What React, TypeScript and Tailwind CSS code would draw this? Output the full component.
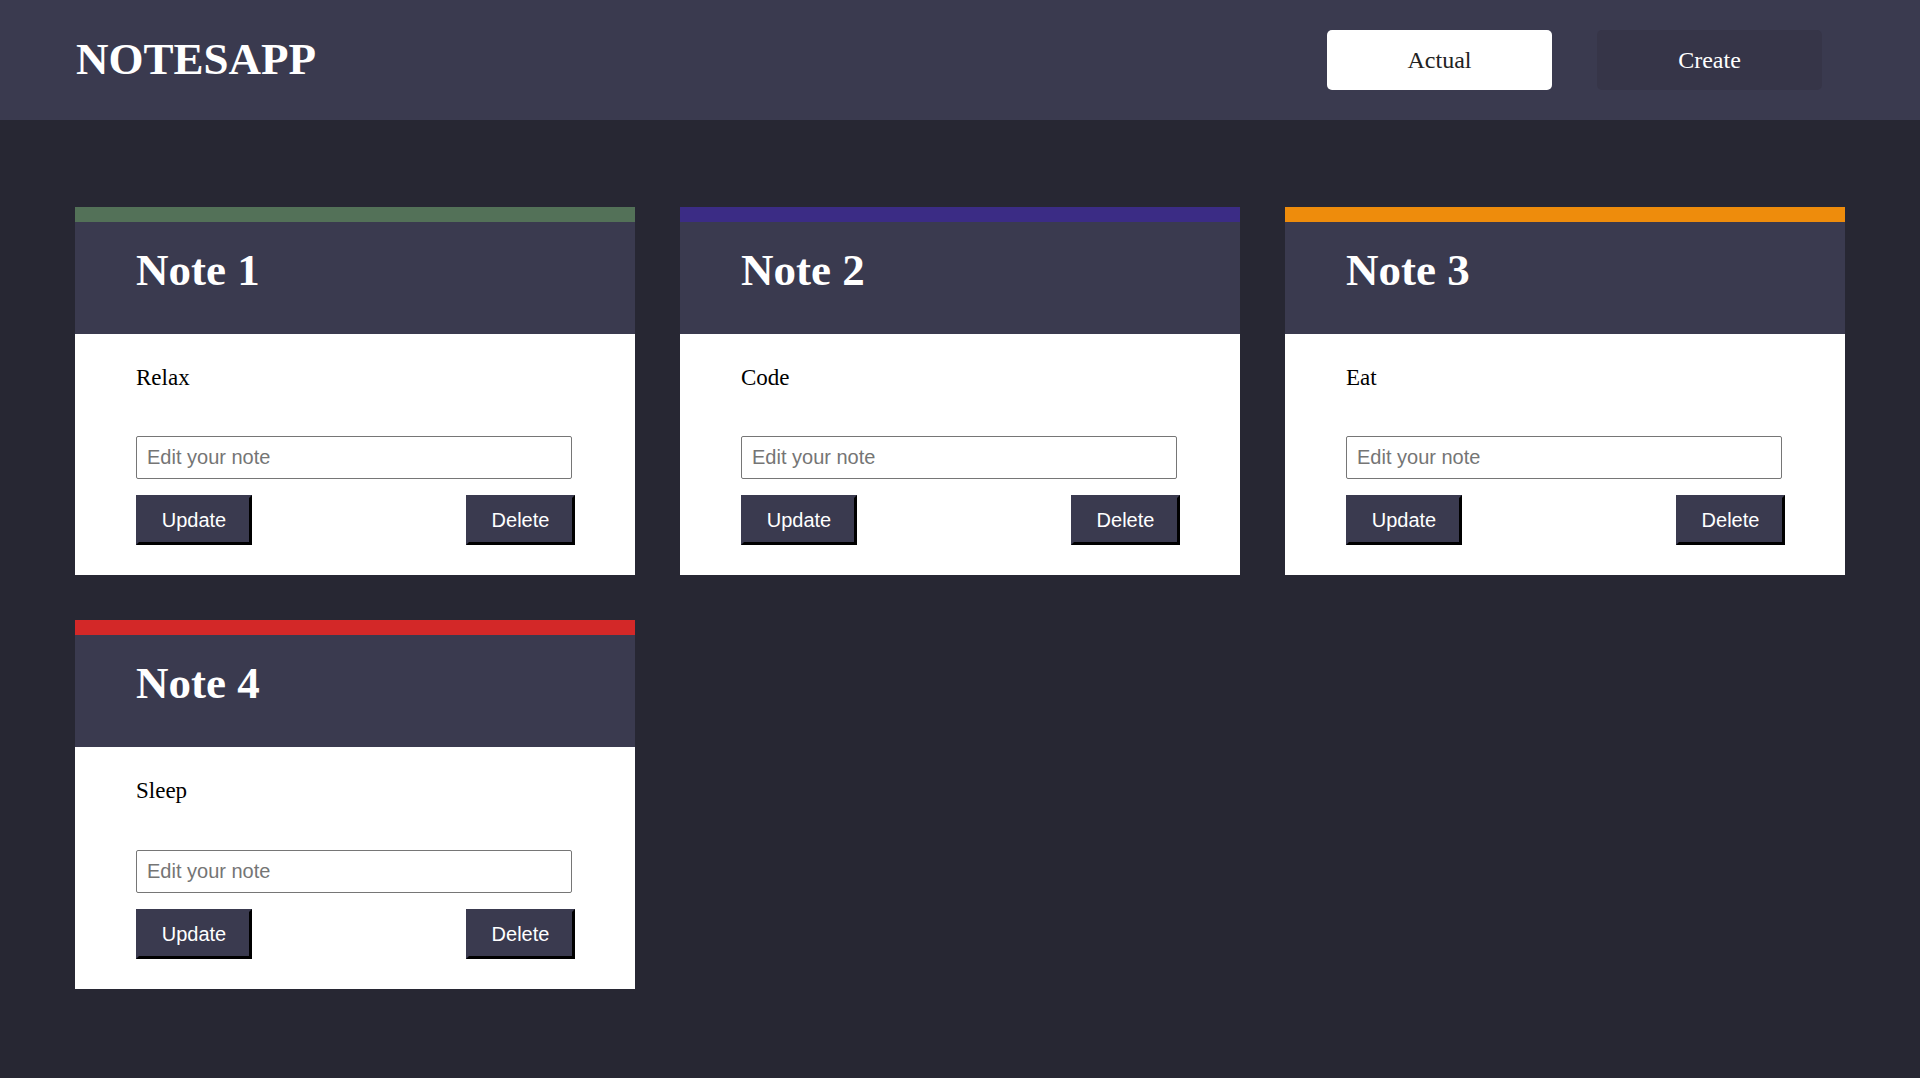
import React, { useState } from 'react';

type Note = {
  id: number;
  title: string;
  body: string;
  barClass: string;
};

const notes: Note[] = [
  { id: 1, title: 'Note 1', body: 'Relax', barClass: 'bg-[#537158]' },
  { id: 2, title: 'Note 2', body: 'Code', barClass: 'bg-[#3b2c85]' },
  { id: 3, title: 'Note 3', body: 'Eat', barClass: 'bg-[#ee8c0c]' },
  { id: 4, title: 'Note 4', body: 'Sleep', barClass: 'bg-[#d32828]' },
];

const NoteCard: React.FC<{ note: Note }> = ({ note }) => {
  const [draft, setDraft] = useState('');

  return (
    <div className="flex flex-col bg-white">
      <div className={`h-[15px] ${note.barClass}`} />
      <div className="h-[112px] bg-[#3a3a4f] pl-[61px] pt-[23px]">
        <h2 className="font-['Liberation_Serif',serif] text-[45px] font-bold leading-[1.15] text-white">
          {note.title}
        </h2>
      </div>
      <div className="flex flex-col pl-[61px] pt-[31px] pb-[30px]">
        <p className="font-['Liberation_Serif',serif] text-[23px] leading-[1.15] text-black">{note.body}</p>
        <input
          value={draft}
          onChange={(e) => setDraft(e.target.value)}
          placeholder="Edit your note"
          className="mt-[45px] h-[43px] w-[436px] rounded-[2px] border border-[#767676] px-[10px] font-['Liberation_Sans',Arial,sans-serif] text-[20px] text-black placeholder:text-[#757575] outline-none"
        />
        <div className="mt-[16px] flex w-[439px] justify-between">
          <button className="h-[50px] w-[116px] border-[3px] border-t-[#3a3a4f] border-l-[#3a3a4f] border-r-black border-b-black bg-[#3a3a4f] font-['Liberation_Sans',Arial,sans-serif] text-[20px] text-white">
            Update
          </button>
          <button className="h-[50px] w-[109px] border-[3px] border-t-[#3a3a4f] border-l-[#3a3a4f] border-r-black border-b-black bg-[#3a3a4f] font-['Liberation_Sans',Arial,sans-serif] text-[20px] text-white">
            Delete
          </button>
        </div>
      </div>
    </div>
  );
};

const App: React.FC = () => {
  const [view, setView] = useState<'actual' | 'create'>('actual');

  return (
    <div className="min-h-screen bg-[#272733] font-['Liberation_Serif',serif]">
      <header className="flex h-[120px] items-center justify-between bg-[#3a3a4f] pl-[76px] pr-[98px]">
        <h1 className="text-[45px] font-bold leading-[1.15] text-white">NOTESAPP</h1>
        <nav className="flex gap-[45px]">
          <button
            onClick={() => setView('actual')}
            className={`h-[60px] w-[225px] rounded-[5px] text-[24px] ${
              view === 'actual' ? 'bg-white text-[#222]' : 'bg-[#363548] text-white'
            }`}
          >
            Actual
          </button>
          <button
            onClick={() => setView('create')}
            className={`h-[60px] w-[225px] rounded-[5px] text-[24px] ${
              view === 'create' ? 'bg-white text-[#222]' : 'bg-[#363548] text-white'
            }`}
          >
            Create
          </button>
        </nav>
      </header>

      <main className="px-[75px] pt-[87px] pb-[60px]">
        <div className="grid grid-cols-3 gap-[45px]">
          {notes.map((note) => (
            <NoteCard key={note.id} note={note} />
          ))}
        </div>
      </main>
    </div>
  );
};

export default App;
